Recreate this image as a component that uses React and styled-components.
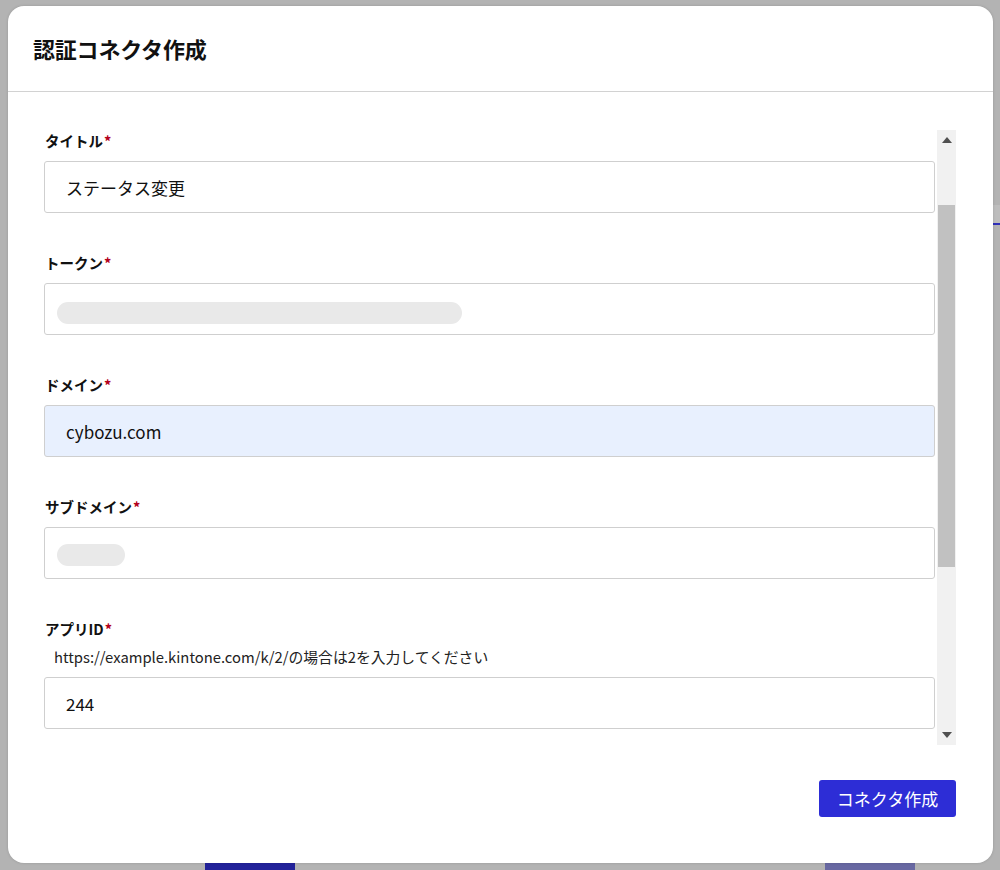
import React, { useLayoutEffect, useRef } from 'react'
import styled, { createGlobalStyle } from 'styled-components'

const GlobalStyle = createGlobalStyle`
  html, body {
    margin: 0;
    padding: 0;
    height: 870px;
    overflow: hidden;
    background: #b3b3b3;
    font-family: "Noto Sans CJK JP", "Noto Sans", sans-serif;
  }
  * { box-sizing: border-box; }
`

const fields = [
  { label: 'タイトル', value: 'ステータス変更' },
  { label: 'トークン', mask: 405, drop: 7 },
  { label: 'ドメイン', value: 'cybozu.com', autofill: true },
  { label: 'サブドメイン', mask: 68, drop: 4 },
  { label: 'アプリID', value: '244', help: 'https://example.kintone.com/k/2/の場合は2を入力してください' },
]

// scroll state shown in the screenshot
const SCROLL_TOP = 93

const Arrow = ({ down }) => (
  <svg width="10" height="6" viewBox="0 0 10 6">
    <polygon points={down ? '0,0 10,0 5,6' : '0,6 10,6 5,0'} fill="#505050" />
  </svg>
)

export default function App() {
  const scrollRef = useRef(null)

  useLayoutEffect(() => {
    if (scrollRef.current) scrollRef.current.scrollTop = SCROLL_TOP
  }, [])

  return (
    <>
      <GlobalStyle />
      <Page>
        <Behind>
          <SideTab />
          <Spacer />
          <BehindFooter>
            <BehindButton tone="dark" />
            <BehindButton tone="pale" />
          </BehindFooter>
        </Behind>

        <Modal>
          <Header>
            <Title>認証コネクタ作成</Title>
          </Header>
          <Body>
            <Scroller ref={scrollRef}>
              <Form>
                {fields.map((f) => (
                  <Field key={f.label}>
                    <Label>
                      {f.label}
                      <Req>*</Req>
                    </Label>
                    {f.help ? <Help>{f.help}</Help> : null}
                    <Input autofill={f.autofill ? 1 : 0}>
                      {f.mask ? <Mask drop={f.drop} style={{ width: f.mask }} /> : f.value}
                    </Input>
                  </Field>
                ))}
              </Form>
            </Scroller>
            <ScrollBar>
              <ScrollBtn>
                <Arrow />
              </ScrollBtn>
              <Track>
                <Thumb />
              </Track>
              <ScrollBtn>
                <Arrow down />
              </ScrollBtn>
            </ScrollBar>
          </Body>
          <Footer>
            <Submit>コネクタ作成</Submit>
          </Footer>
        </Modal>
      </Page>
    </>
  )
}

const Page = styled.div`
  position: relative;
  width: 1000px;
  height: 870px;
  overflow: hidden;
`

const Behind = styled.div`
  height: 100%;
  display: flex;
  flex-direction: column;
`

const SideTab = styled.div`
  margin-top: 205px;
  align-self: flex-end;
  width: 10px;
  height: 20px;
  background: #bdbdbd;
  border-bottom: 2px solid #3030b8;
`

const Spacer = styled.div`
  flex: 1;
`

const BehindFooter = styled.div`
  display: flex;
  height: 7px;
  padding: 0 85px 0 205px;
  justify-content: space-between;
`

const BehindButton = styled.div`
  width: 90px;
  height: 40px;
  background: ${(p) => (p.tone === 'dark' ? '#22229a' : '#6868a2')};
`

const Modal = styled.div`
  position: absolute;
  top: 6px;
  left: 8px;
  width: 985px;
  height: 857px;
  background: #fff;
  border-radius: 16px;
  display: flex;
  flex-direction: column;
  box-shadow: 0 0 3px rgba(0, 0, 0, 0.15);
`

const Header = styled.div`
  height: 86px;
  padding: 0 25px;
  display: flex;
  align-items: center;
  border-bottom: 1px solid #d2d2d2;
`

const Title = styled.h2`
  margin: 0 0 1px;
  font-size: 22px;
  font-weight: 700;
  color: #111;
  letter-spacing: -0.2px;
`

const Body = styled.div`
  display: flex;
  height: 653px;
  padding: 38px 37px 0 36px;
`

const Scroller = styled.div`
  flex: 1;
  height: 615px;
  overflow: hidden;
`

const ScrollBar = styled.div`
  width: 19px;
  height: 615px;
  display: flex;
  flex-direction: column;
  background: #f1f1f1;
`

const ScrollBtn = styled.div`
  height: 20px;
  display: flex;
  align-items: center;
  justify-content: center;
`

const Track = styled.div`
  flex: 1;
  padding-top: 55px;
`

const Thumb = styled.div`
  height: 362px;
  margin: 0 1px;
  background: #c1c1c1;
`

const Form = styled.div`
  padding: 94px 2px 287px 0;
`

const Field = styled.div`
  margin-bottom: 40px;

  &:last-child {
    margin-bottom: 0;
  }
`

const Label = styled.div`
  height: 20px;
  line-height: 20px;
  margin: 0 0 10px 1px;
  font-size: 14.5px;
  font-weight: 700;
  color: #111;
`

const Req = styled.span`
  color: #b3001b;
  margin-left: 1px;
`

const Help = styled.div`
  height: 20px;
  line-height: 20px;
  margin: -2px 0 10px 10px;
  font-size: 14.8px;
  color: #222;
`

const Input = styled.div`
  height: 52px;
  display: flex;
  align-items: center;
  padding: 0 21px;
  border: 1px solid #cfcfcf;
  border-radius: 3px;
  background: ${(p) => (p.autofill ? '#e8f0fe' : '#fff')};
  font-size: 17px;
  color: #111;
`

const Mask = styled.div`
  height: 22px;
  margin: ${(p) => p.drop}px 0 0 -9px;
  border-radius: 11px;
  background: #e9e9e9;
`

const Footer = styled.div`
  display: flex;
  justify-content: flex-end;
  padding: 35px 37px 0 0;
`

const Submit = styled.button`
  width: 137px;
  height: 37px;
  border: none;
  border-radius: 3px;
  background: #2d2dd6;
  color: #fff;
  font-family: "Noto Sans CJK JP", "Noto Sans", sans-serif;
  font-size: 17px;
  cursor: pointer;
`
